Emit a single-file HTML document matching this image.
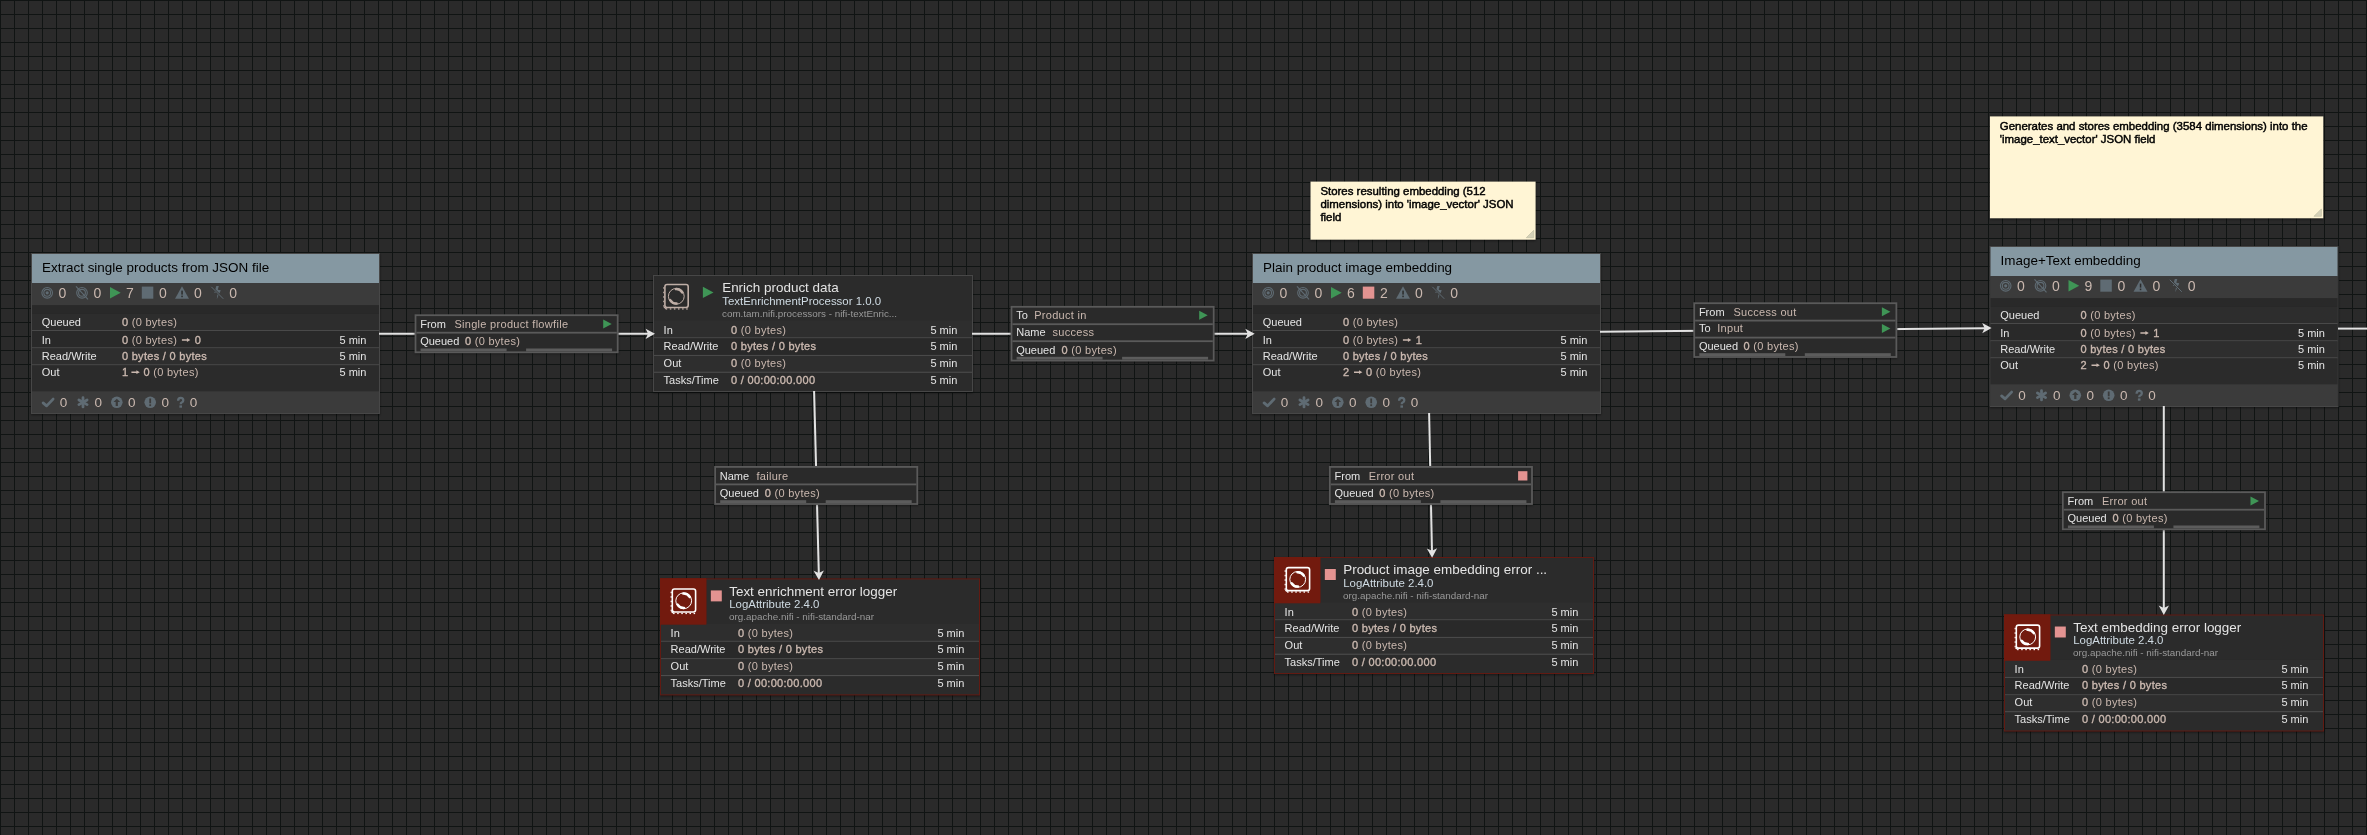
<!DOCTYPE html><html><head><meta charset="utf-8"><style>html,body{margin:0;padding:0;background:#2c2c2c;overflow:hidden}svg{display:block;will-change:transform}</style></head><body><svg width="2367" height="835" viewBox="0 0 2367 835" font-family="'Liberation Sans', sans-serif"><defs><pattern id="g" width="14" height="14" patternUnits="userSpaceOnUse"><rect width="14" height="14" fill="#2a2a2a"/><path d="M0 0.5H14M0.5 0V14" stroke="#101413" stroke-width="1"/></pattern></defs><filter id="sh" x="-10%" y="-30%" width="120%" height="160%"><feGaussianBlur stdDeviation="1.3"/></filter><rect width="2367" height="835" fill="url(#g)"/><rect x="31" y="254" width="349" height="161" fill="#000" opacity="0.45" filter="url(#sh)"/><rect x="31" y="253" width="349" height="161" fill="#474747"/><rect x="32" y="254" width="347" height="159" fill="#2b2b2b"/><rect x="32" y="254" width="347" height="29.2" fill="#8598a2"/><text x="42.1" y="271.8" font-size="13.45" fill="#000000" style="color:#000000">Extract single products from JSON file</text><rect x="32" y="283.2" width="347" height="22.1" fill="#3b3b3b"/><rect x="32" y="305.3" width="347" height="8.4" fill="#292929"/><rect x="32" y="313.7" width="347" height="16.5" fill="#2d2d2d"/><rect x="32" y="330.2" width="347" height="1" fill="#525252"/><rect x="32" y="331.2" width="347" height="16.2" fill="#292929"/><rect x="32" y="347.4" width="347" height="1" fill="#525252"/><rect x="32" y="348.4" width="347" height="16" fill="#2e2e2e"/><rect x="32" y="364.4" width="347" height="1" fill="#525252"/><rect x="32" y="365.4" width="347" height="25.9" fill="#2b2b2b"/><rect x="32" y="391.3" width="347" height="21.7" fill="#3b3b3b"/><g fill="none" stroke="#5f6b73" stroke-width="1.1"><circle cx="47.2" cy="292.8" r="5.3"/><circle cx="47.2" cy="292.8" r="3.4"/></g><circle cx="47.2" cy="292.8" r="1.6" fill="#5f6b73"/><g fill="none" stroke="#5f6b73" stroke-width="1.1"><circle cx="82" cy="292.8" r="5.3"/><circle cx="82" cy="292.8" r="3.4"/><line x1="76" y1="286.3" x2="88" y2="299.3"/></g><path d="M110 286.90000000000003L120.7 292.65000000000003L110 298.40000000000003Z" fill="#3f9556"/><rect x="141.8" y="286.6" width="11.5" height="12.1" fill="#5f6b73"/><path d="M182 286.3L189 298.8L175 298.8Z" fill="#5f6b73"/><rect x="181.3" y="290.6" width="1.5" height="4" fill="#2b2b2b"/><rect x="181.3" y="295.6" width="1.5" height="1.6" fill="#2b2b2b"/><path d="M216.3 286.0L218.8 286.0L217.8 289.8L220.8 290.3L216.8 299.3L217.60000000000002 293.3L214.3 292.8Z" fill="#5f6b73"/><line x1="211.3" y1="286.8" x2="223.3" y2="298.8" stroke="#3b3b3b" stroke-width="2.2"/><line x1="211.3" y1="286.8" x2="223.3" y2="298.8" stroke="#5f6b73" stroke-width="1"/><text x="58.4" y="298.0" font-size="14" fill="#cab8af" style="color:#cab8af" transform-origin="0 0">0</text><text x="93.6" y="298.0" font-size="14" fill="#cab8af" style="color:#cab8af" transform-origin="0 0">0</text><text x="126" y="298.0" font-size="14" fill="#cab8af" style="color:#cab8af" transform-origin="0 0">7</text><text x="159" y="298.0" font-size="14" fill="#cab8af" style="color:#cab8af" transform-origin="0 0">0</text><text x="194" y="298.0" font-size="14" fill="#cab8af" style="color:#cab8af" transform-origin="0 0">0</text><text x="229.3" y="298.0" font-size="14" fill="#cab8af" style="color:#cab8af" transform-origin="0 0">0</text><text x="41.8" y="325.70000000000005" font-size="11" fill="#e4e4e4" style="color:#e4e4e4">Queued</text><text x="41.8" y="343.6" font-size="11" fill="#e4e4e4" style="color:#e4e4e4">In</text><text x="41.8" y="359.70000000000005" font-size="11" fill="#e4e4e4" style="color:#e4e4e4">Read/Write</text><text x="41.8" y="375.8" font-size="11" fill="#e4e4e4" style="color:#e4e4e4">Out</text><text x="121.9" y="325.70000000000005" font-size="11" fill="#cab8af" style="color:#cab8af" letter-spacing="0.3"><tspan stroke="currentColor" stroke-width="0.35">0</tspan><tspan> (0 bytes)</tspan></text><text x="121.9" y="343.6" font-size="11" fill="#cab8af" style="color:#cab8af" letter-spacing="0.3"><tspan stroke="currentColor" stroke-width="0.35">0</tspan><tspan> (0 bytes)</tspan></text><path d="M181.9 339.3H186.9V338.1L190.3 340.0L186.9 341.9V340.7H181.9Z" fill="#cab8af"/><text x="194.8" y="343.6" font-size="11" fill="#cab8af" style="color:#cab8af"><tspan stroke="currentColor" stroke-width="0.35">0</tspan></text><text x="121.9" y="359.70000000000005" font-size="11" fill="#cab8af" style="color:#cab8af" letter-spacing="0.3"><tspan stroke="currentColor" stroke-width="0.35">0 bytes / 0 bytes</tspan></text><text x="121.9" y="375.8" font-size="11" fill="#cab8af" style="color:#cab8af"><tspan stroke="currentColor" stroke-width="0.35">1</tspan></text><path d="M131.4 371.5H136.4V370.3L139.8 372.2L136.4 374.09999999999997V372.9H131.4Z" fill="#cab8af"/><text x="143.4" y="375.8" font-size="11" fill="#cab8af" style="color:#cab8af" letter-spacing="0.3"><tspan stroke="currentColor" stroke-width="0.35">0</tspan><tspan> (0 bytes)</tspan></text><text x="366.4" y="343.6" font-size="11" fill="#e4e4e4" style="color:#e4e4e4" text-anchor="end">5 min</text><text x="366.4" y="359.70000000000005" font-size="11" fill="#e4e4e4" style="color:#e4e4e4" text-anchor="end">5 min</text><text x="366.4" y="375.8" font-size="11" fill="#e4e4e4" style="color:#e4e4e4" text-anchor="end">5 min</text><path d="M43.1 402.9L46.6 405.9L53.1 399.09999999999997" fill="none" stroke="#5f6b73" stroke-width="2.8" stroke-linecap="round" stroke-linejoin="round"/><g stroke="#5f6b73" stroke-width="2.8" stroke-linecap="round"><line x1="83" y1="397.7" x2="83" y2="406.90000000000003"/><line x1="78.9" y1="400.0" x2="87.1" y2="404.6"/><line x1="78.9" y1="404.6" x2="87.1" y2="400.0"/></g><circle cx="116.8" cy="402.3" r="5.8" fill="#5f6b73"/><path d="M116.8 398.7L120.1 402.0L117.89999999999999 402.0L117.89999999999999 406.1L115.7 406.1L115.7 402.0L113.5 402.0Z" fill="#3b3b3b"/><circle cx="150.2" cy="402.3" r="5.8" fill="#5f6b73"/><rect x="149.29999999999998" y="398.5" width="1.8" height="4.8" fill="#3b3b3b"/><rect x="149.29999999999998" y="404.3" width="1.8" height="1.8" fill="#3b3b3b"/><path d="M178.10000000000002 400.8Q178.10000000000002 397.90000000000003 180.70000000000002 397.90000000000003Q183.3 397.90000000000003 183.3 400.3Q183.3 401.8 181.70000000000002 402.5Q180.70000000000002 403.0 180.70000000000002 404.20000000000005" fill="none" stroke="#5f6b73" stroke-width="2.3"/><rect x="179.4" y="405.40000000000003" width="2.6" height="2.3" fill="#5f6b73"/><text x="59.7" y="406.70000000000005" font-size="13.5" fill="#cab8af" style="color:#cab8af">0</text><text x="94.5" y="406.70000000000005" font-size="13.5" fill="#cab8af" style="color:#cab8af">0</text><text x="128" y="406.70000000000005" font-size="13.5" fill="#cab8af" style="color:#cab8af">0</text><text x="161.4" y="406.70000000000005" font-size="13.5" fill="#cab8af" style="color:#cab8af">0</text><text x="189.7" y="406.70000000000005" font-size="13.5" fill="#cab8af" style="color:#cab8af">0</text><rect x="1252" y="254" width="349" height="161" fill="#000" opacity="0.45" filter="url(#sh)"/><rect x="1252" y="253" width="349" height="161" fill="#474747"/><rect x="1253" y="254" width="347" height="159" fill="#2b2b2b"/><rect x="1253" y="254" width="347" height="29.2" fill="#8598a2"/><text x="1263.1" y="271.8" font-size="13.45" fill="#000000" style="color:#000000">Plain product image embedding</text><rect x="1253" y="283.2" width="347" height="22.1" fill="#3b3b3b"/><rect x="1253" y="305.3" width="347" height="8.4" fill="#292929"/><rect x="1253" y="313.7" width="347" height="16.5" fill="#2d2d2d"/><rect x="1253" y="330.2" width="347" height="1" fill="#525252"/><rect x="1253" y="331.2" width="347" height="16.2" fill="#292929"/><rect x="1253" y="347.4" width="347" height="1" fill="#525252"/><rect x="1253" y="348.4" width="347" height="16" fill="#2e2e2e"/><rect x="1253" y="364.4" width="347" height="1" fill="#525252"/><rect x="1253" y="365.4" width="347" height="25.9" fill="#2b2b2b"/><rect x="1253" y="391.3" width="347" height="21.7" fill="#3b3b3b"/><g fill="none" stroke="#5f6b73" stroke-width="1.1"><circle cx="1268.2" cy="292.8" r="5.3"/><circle cx="1268.2" cy="292.8" r="3.4"/></g><circle cx="1268.2" cy="292.8" r="1.6" fill="#5f6b73"/><g fill="none" stroke="#5f6b73" stroke-width="1.1"><circle cx="1303" cy="292.8" r="5.3"/><circle cx="1303" cy="292.8" r="3.4"/><line x1="1297" y1="286.3" x2="1309" y2="299.3"/></g><path d="M1331 286.90000000000003L1341.7 292.65000000000003L1331 298.40000000000003Z" fill="#3f9556"/><rect x="1362.8" y="286.6" width="11.5" height="12.1" fill="#e39391"/><path d="M1403 286.3L1410 298.8L1396 298.8Z" fill="#5f6b73"/><rect x="1402.3" y="290.6" width="1.5" height="4" fill="#2b2b2b"/><rect x="1402.3" y="295.6" width="1.5" height="1.6" fill="#2b2b2b"/><path d="M1437.3 286.0L1439.8 286.0L1438.8 289.8L1441.8 290.3L1437.8 299.3L1438.6 293.3L1435.3 292.8Z" fill="#5f6b73"/><line x1="1432.3" y1="286.8" x2="1444.3" y2="298.8" stroke="#3b3b3b" stroke-width="2.2"/><line x1="1432.3" y1="286.8" x2="1444.3" y2="298.8" stroke="#5f6b73" stroke-width="1"/><text x="1279.4" y="298.0" font-size="14" fill="#cab8af" style="color:#cab8af" transform-origin="0 0">0</text><text x="1314.6" y="298.0" font-size="14" fill="#cab8af" style="color:#cab8af" transform-origin="0 0">0</text><text x="1347" y="298.0" font-size="14" fill="#cab8af" style="color:#cab8af" transform-origin="0 0">6</text><text x="1380" y="298.0" font-size="14" fill="#cab8af" style="color:#cab8af" transform-origin="0 0">2</text><text x="1415" y="298.0" font-size="14" fill="#cab8af" style="color:#cab8af" transform-origin="0 0">0</text><text x="1450.3" y="298.0" font-size="14" fill="#cab8af" style="color:#cab8af" transform-origin="0 0">0</text><text x="1262.8" y="325.70000000000005" font-size="11" fill="#e4e4e4" style="color:#e4e4e4">Queued</text><text x="1262.8" y="343.6" font-size="11" fill="#e4e4e4" style="color:#e4e4e4">In</text><text x="1262.8" y="359.70000000000005" font-size="11" fill="#e4e4e4" style="color:#e4e4e4">Read/Write</text><text x="1262.8" y="375.8" font-size="11" fill="#e4e4e4" style="color:#e4e4e4">Out</text><text x="1342.9" y="325.70000000000005" font-size="11" fill="#cab8af" style="color:#cab8af" letter-spacing="0.3"><tspan stroke="currentColor" stroke-width="0.35">0</tspan><tspan> (0 bytes)</tspan></text><text x="1342.9" y="343.6" font-size="11" fill="#cab8af" style="color:#cab8af" letter-spacing="0.3"><tspan stroke="currentColor" stroke-width="0.35">0</tspan><tspan> (0 bytes)</tspan></text><path d="M1402.9 339.3H1407.9V338.1L1411.3000000000002 340.0L1407.9 341.9V340.7H1402.9Z" fill="#cab8af"/><text x="1415.8000000000002" y="343.6" font-size="11" fill="#cab8af" style="color:#cab8af"><tspan stroke="currentColor" stroke-width="0.35">1</tspan></text><text x="1342.9" y="359.70000000000005" font-size="11" fill="#cab8af" style="color:#cab8af" letter-spacing="0.3"><tspan stroke="currentColor" stroke-width="0.35">0 bytes / 0 bytes</tspan></text><text x="1342.9" y="375.8" font-size="11" fill="#cab8af" style="color:#cab8af"><tspan stroke="currentColor" stroke-width="0.35">2</tspan></text><path d="M1354.0 371.5H1359.0V370.3L1362.4 372.2L1359.0 374.09999999999997V372.9H1354.0Z" fill="#cab8af"/><text x="1366.0" y="375.8" font-size="11" fill="#cab8af" style="color:#cab8af" letter-spacing="0.3"><tspan stroke="currentColor" stroke-width="0.35">0</tspan><tspan> (0 bytes)</tspan></text><text x="1587.4" y="343.6" font-size="11" fill="#e4e4e4" style="color:#e4e4e4" text-anchor="end">5 min</text><text x="1587.4" y="359.70000000000005" font-size="11" fill="#e4e4e4" style="color:#e4e4e4" text-anchor="end">5 min</text><text x="1587.4" y="375.8" font-size="11" fill="#e4e4e4" style="color:#e4e4e4" text-anchor="end">5 min</text><path d="M1264.1 402.9L1267.6 405.9L1274.1 399.09999999999997" fill="none" stroke="#5f6b73" stroke-width="2.8" stroke-linecap="round" stroke-linejoin="round"/><g stroke="#5f6b73" stroke-width="2.8" stroke-linecap="round"><line x1="1304" y1="397.7" x2="1304" y2="406.90000000000003"/><line x1="1299.9" y1="400.0" x2="1308.1" y2="404.6"/><line x1="1299.9" y1="404.6" x2="1308.1" y2="400.0"/></g><circle cx="1337.8" cy="402.3" r="5.8" fill="#5f6b73"/><path d="M1337.8 398.7L1341.1 402.0L1338.8999999999999 402.0L1338.8999999999999 406.1L1336.7 406.1L1336.7 402.0L1334.5 402.0Z" fill="#3b3b3b"/><circle cx="1371.2" cy="402.3" r="5.8" fill="#5f6b73"/><rect x="1370.3" y="398.5" width="1.8" height="4.8" fill="#3b3b3b"/><rect x="1370.3" y="404.3" width="1.8" height="1.8" fill="#3b3b3b"/><path d="M1399.1 400.8Q1399.1 397.90000000000003 1401.7 397.90000000000003Q1404.3 397.90000000000003 1404.3 400.3Q1404.3 401.8 1402.7 402.5Q1401.7 403.0 1401.7 404.20000000000005" fill="none" stroke="#5f6b73" stroke-width="2.3"/><rect x="1400.3999999999999" y="405.40000000000003" width="2.6" height="2.3" fill="#5f6b73"/><text x="1280.7" y="406.70000000000005" font-size="13.5" fill="#cab8af" style="color:#cab8af">0</text><text x="1315.5" y="406.70000000000005" font-size="13.5" fill="#cab8af" style="color:#cab8af">0</text><text x="1349" y="406.70000000000005" font-size="13.5" fill="#cab8af" style="color:#cab8af">0</text><text x="1382.4" y="406.70000000000005" font-size="13.5" fill="#cab8af" style="color:#cab8af">0</text><text x="1410.7" y="406.70000000000005" font-size="13.5" fill="#cab8af" style="color:#cab8af">0</text><rect x="1989.5" y="247" width="349" height="161" fill="#000" opacity="0.45" filter="url(#sh)"/><rect x="1989.5" y="246" width="349" height="161" fill="#474747"/><rect x="1990.5" y="247" width="347" height="159" fill="#2b2b2b"/><rect x="1990.5" y="247" width="347" height="29.2" fill="#8598a2"/><text x="2000.6" y="264.8" font-size="13.45" fill="#000000" style="color:#000000">Image+Text embedding</text><rect x="1990.5" y="276.2" width="347" height="22.1" fill="#3b3b3b"/><rect x="1990.5" y="298.3" width="347" height="8.4" fill="#292929"/><rect x="1990.5" y="306.7" width="347" height="16.5" fill="#2d2d2d"/><rect x="1990.5" y="323.2" width="347" height="1" fill="#525252"/><rect x="1990.5" y="324.2" width="347" height="16.2" fill="#292929"/><rect x="1990.5" y="340.4" width="347" height="1" fill="#525252"/><rect x="1990.5" y="341.4" width="347" height="16" fill="#2e2e2e"/><rect x="1990.5" y="357.4" width="347" height="1" fill="#525252"/><rect x="1990.5" y="358.4" width="347" height="25.9" fill="#2b2b2b"/><rect x="1990.5" y="384.3" width="347" height="21.7" fill="#3b3b3b"/><g fill="none" stroke="#5f6b73" stroke-width="1.1"><circle cx="2005.7" cy="285.8" r="5.3"/><circle cx="2005.7" cy="285.8" r="3.4"/></g><circle cx="2005.7" cy="285.8" r="1.6" fill="#5f6b73"/><g fill="none" stroke="#5f6b73" stroke-width="1.1"><circle cx="2040.5" cy="285.8" r="5.3"/><circle cx="2040.5" cy="285.8" r="3.4"/><line x1="2034.5" y1="279.3" x2="2046.5" y2="292.3"/></g><path d="M2068.5 279.90000000000003L2079.2 285.65000000000003L2068.5 291.40000000000003Z" fill="#3f9556"/><rect x="2100.3" y="279.6" width="11.5" height="12.1" fill="#5f6b73"/><path d="M2140.5 279.3L2147.5 291.8L2133.5 291.8Z" fill="#5f6b73"/><rect x="2139.8" y="283.6" width="1.5" height="4" fill="#2b2b2b"/><rect x="2139.8" y="288.6" width="1.5" height="1.6" fill="#2b2b2b"/><path d="M2174.8 279.0L2177.3 279.0L2176.3 282.8L2179.3 283.3L2175.3 292.3L2176.1000000000004 286.3L2172.8 285.8Z" fill="#5f6b73"/><line x1="2169.8" y1="279.8" x2="2181.8" y2="291.8" stroke="#3b3b3b" stroke-width="2.2"/><line x1="2169.8" y1="279.8" x2="2181.8" y2="291.8" stroke="#5f6b73" stroke-width="1"/><text x="2016.9" y="291.0" font-size="14" fill="#cab8af" style="color:#cab8af" transform-origin="0 0">0</text><text x="2052.1" y="291.0" font-size="14" fill="#cab8af" style="color:#cab8af" transform-origin="0 0">0</text><text x="2084.5" y="291.0" font-size="14" fill="#cab8af" style="color:#cab8af" transform-origin="0 0">9</text><text x="2117.5" y="291.0" font-size="14" fill="#cab8af" style="color:#cab8af" transform-origin="0 0">0</text><text x="2152.5" y="291.0" font-size="14" fill="#cab8af" style="color:#cab8af" transform-origin="0 0">0</text><text x="2187.8" y="291.0" font-size="14" fill="#cab8af" style="color:#cab8af" transform-origin="0 0">0</text><text x="2000.3" y="318.70000000000005" font-size="11" fill="#e4e4e4" style="color:#e4e4e4">Queued</text><text x="2000.3" y="336.6" font-size="11" fill="#e4e4e4" style="color:#e4e4e4">In</text><text x="2000.3" y="352.70000000000005" font-size="11" fill="#e4e4e4" style="color:#e4e4e4">Read/Write</text><text x="2000.3" y="368.8" font-size="11" fill="#e4e4e4" style="color:#e4e4e4">Out</text><text x="2080.4" y="318.70000000000005" font-size="11" fill="#cab8af" style="color:#cab8af" letter-spacing="0.3"><tspan stroke="currentColor" stroke-width="0.35">0</tspan><tspan> (0 bytes)</tspan></text><text x="2080.4" y="336.6" font-size="11" fill="#cab8af" style="color:#cab8af" letter-spacing="0.3"><tspan stroke="currentColor" stroke-width="0.35">0</tspan><tspan> (0 bytes)</tspan></text><path d="M2140.4 332.3H2145.4V331.1L2148.8 333.0L2145.4 334.9V333.7H2140.4Z" fill="#cab8af"/><text x="2153.3" y="336.6" font-size="11" fill="#cab8af" style="color:#cab8af"><tspan stroke="currentColor" stroke-width="0.35">1</tspan></text><text x="2080.4" y="352.70000000000005" font-size="11" fill="#cab8af" style="color:#cab8af" letter-spacing="0.3"><tspan stroke="currentColor" stroke-width="0.35">0 bytes / 0 bytes</tspan></text><text x="2080.4" y="368.8" font-size="11" fill="#cab8af" style="color:#cab8af"><tspan stroke="currentColor" stroke-width="0.35">2</tspan></text><path d="M2091.5 364.5H2096.5V363.3L2099.9 365.2L2096.5 367.09999999999997V365.9H2091.5Z" fill="#cab8af"/><text x="2103.5" y="368.8" font-size="11" fill="#cab8af" style="color:#cab8af" letter-spacing="0.3"><tspan stroke="currentColor" stroke-width="0.35">0</tspan><tspan> (0 bytes)</tspan></text><text x="2324.9" y="336.6" font-size="11" fill="#e4e4e4" style="color:#e4e4e4" text-anchor="end">5 min</text><text x="2324.9" y="352.70000000000005" font-size="11" fill="#e4e4e4" style="color:#e4e4e4" text-anchor="end">5 min</text><text x="2324.9" y="368.8" font-size="11" fill="#e4e4e4" style="color:#e4e4e4" text-anchor="end">5 min</text><path d="M2001.6 395.9L2005.1 398.9L2011.6 392.09999999999997" fill="none" stroke="#5f6b73" stroke-width="2.8" stroke-linecap="round" stroke-linejoin="round"/><g stroke="#5f6b73" stroke-width="2.8" stroke-linecap="round"><line x1="2041.5" y1="390.7" x2="2041.5" y2="399.90000000000003"/><line x1="2037.4" y1="393.0" x2="2045.6" y2="397.6"/><line x1="2037.4" y1="397.6" x2="2045.6" y2="393.0"/></g><circle cx="2075.3" cy="395.3" r="5.8" fill="#5f6b73"/><path d="M2075.3 391.7L2078.6000000000004 395.0L2076.4 395.0L2076.4 399.1L2074.2000000000003 399.1L2074.2000000000003 395.0L2072.0 395.0Z" fill="#3b3b3b"/><circle cx="2108.7" cy="395.3" r="5.8" fill="#5f6b73"/><rect x="2107.7999999999997" y="391.5" width="1.8" height="4.8" fill="#3b3b3b"/><rect x="2107.7999999999997" y="397.3" width="1.8" height="1.8" fill="#3b3b3b"/><path d="M2136.6000000000004 393.8Q2136.6000000000004 390.90000000000003 2139.2000000000003 390.90000000000003Q2141.8 390.90000000000003 2141.8 393.3Q2141.8 394.8 2140.2000000000003 395.5Q2139.2000000000003 396.0 2139.2000000000003 397.20000000000005" fill="none" stroke="#5f6b73" stroke-width="2.3"/><rect x="2137.9" y="398.40000000000003" width="2.6" height="2.3" fill="#5f6b73"/><text x="2018.2" y="399.70000000000005" font-size="13.5" fill="#cab8af" style="color:#cab8af">0</text><text x="2053.0" y="399.70000000000005" font-size="13.5" fill="#cab8af" style="color:#cab8af">0</text><text x="2086.5" y="399.70000000000005" font-size="13.5" fill="#cab8af" style="color:#cab8af">0</text><text x="2119.9" y="399.70000000000005" font-size="13.5" fill="#cab8af" style="color:#cab8af">0</text><text x="2148.2" y="399.70000000000005" font-size="13.5" fill="#cab8af" style="color:#cab8af">0</text><rect x="653" y="276" width="320" height="117" fill="#000" opacity="0.45" filter="url(#sh)"/><rect x="653" y="275" width="320" height="117" fill="#474747"/><rect x="654" y="276" width="318" height="115" fill="#2b2b2b"/><rect x="664.9000000000001" y="284.50000000000006" width="23.3" height="23.0" rx="2.2" fill="none" stroke="#bfaea6" stroke-width="1.6"/><rect x="663.2" y="287.20000000000005" width="1.2" height="1.5" fill="#bfaea6"/><rect x="663.2" y="291.70000000000005" width="1.2" height="1.5" fill="#bfaea6"/><rect x="663.2" y="296.20000000000005" width="1.2" height="1.5" fill="#bfaea6"/><rect x="663.2" y="300.70000000000005" width="1.2" height="1.5" fill="#bfaea6"/><rect x="663.2" y="305.20000000000005" width="1.2" height="1.5" fill="#bfaea6"/><rect x="665.7" y="308.30000000000007" width="1.5" height="1.3" fill="#bfaea6"/><rect x="669.8000000000001" y="308.30000000000007" width="1.5" height="1.3" fill="#bfaea6"/><rect x="673.9000000000001" y="308.30000000000007" width="1.5" height="1.3" fill="#bfaea6"/><rect x="678.0" y="308.30000000000007" width="1.5" height="1.3" fill="#bfaea6"/><rect x="682.1" y="308.30000000000007" width="1.5" height="1.3" fill="#bfaea6"/><rect x="686.2" y="308.30000000000007" width="1.5" height="1.3" fill="#bfaea6"/><path d="M663.9000000000001 307.1L666.2 308.70000000000005" stroke="#bfaea6" stroke-width="1.2"/><circle cx="676.3000000000001" cy="296.30000000000007" r="7.9" fill="none" stroke="#bfaea6" stroke-width="1.0"/><path d="M676.05 289.10A7.2 7.2 0 0 1 682.41 292.48" fill="none" stroke="#bfaea6" stroke-width="2.5" stroke-linecap="round"/><path d="M676.55 303.50A7.2 7.2 0 0 1 670.19 300.12" fill="none" stroke="#bfaea6" stroke-width="2.5" stroke-linecap="round"/><path d="M702.9000000000001 286.8L713.5000000000001 292.45L702.9000000000001 298.1Z" fill="#3f9556"/><text x="722.2" y="292.1" font-size="13.45" fill="#e4e4e4" style="color:#e4e4e4">Enrich product data</text><text x="722.2" y="304.70000000000005" font-size="11.45" fill="#cfdbe3" style="color:#cfdbe3">TextEnrichmentProcessor 1.0.0</text><text x="722.0" y="316.70000000000005" font-size="9.85" fill="#9a9a9a" style="color:#9a9a9a">com.tam.nifi.processors - nifi-textEnric...</text><rect x="654" y="320.40000000000003" width="318" height="17" fill="#2e2e2e"/><rect x="654" y="337.40000000000003" width="318" height="1" fill="#525252"/><rect x="654" y="338.40000000000003" width="318" height="16.5" fill="#292929"/><rect x="654" y="354.90000000000003" width="318" height="1" fill="#525252"/><rect x="654" y="355.90000000000003" width="318" height="15.8" fill="#2e2e2e"/><rect x="654" y="371.70000000000005" width="318" height="1" fill="#525252"/><text x="663.6" y="333.90000000000003" font-size="11" fill="#e4e4e4" style="color:#e4e4e4">In</text><text x="663.6" y="349.8" font-size="11" fill="#e4e4e4" style="color:#e4e4e4">Read/Write</text><text x="663.6" y="366.70000000000005" font-size="11" fill="#e4e4e4" style="color:#e4e4e4">Out</text><text x="663.6" y="383.5" font-size="11" fill="#e4e4e4" style="color:#e4e4e4">Tasks/Time</text><text x="731.0" y="333.90000000000003" font-size="11" fill="#cab8af" style="color:#cab8af" letter-spacing="0.3"><tspan stroke="currentColor" stroke-width="0.35">0</tspan><tspan> (0 bytes)</tspan></text><text x="731.0" y="349.8" font-size="11" fill="#cab8af" style="color:#cab8af" letter-spacing="0.3"><tspan stroke="currentColor" stroke-width="0.35">0 bytes / 0 bytes</tspan></text><text x="731.0" y="366.70000000000005" font-size="11" fill="#cab8af" style="color:#cab8af" letter-spacing="0.3"><tspan stroke="currentColor" stroke-width="0.35">0</tspan><tspan> (0 bytes)</tspan></text><text x="731.0" y="383.5" font-size="11" fill="#cab8af" style="color:#cab8af" letter-spacing="0.3"><tspan stroke="currentColor" stroke-width="0.35">0 / 00:00:00.000</tspan></text><text x="957.3000000000001" y="333.90000000000003" font-size="11" fill="#e4e4e4" style="color:#e4e4e4" text-anchor="end">5 min</text><text x="957.3000000000001" y="349.8" font-size="11" fill="#e4e4e4" style="color:#e4e4e4" text-anchor="end">5 min</text><text x="957.3000000000001" y="366.70000000000005" font-size="11" fill="#e4e4e4" style="color:#e4e4e4" text-anchor="end">5 min</text><text x="957.3000000000001" y="383.5" font-size="11" fill="#e4e4e4" style="color:#e4e4e4" text-anchor="end">5 min</text><rect x="660" y="579.4" width="320" height="117" fill="#000" opacity="0.45" filter="url(#sh)"/><rect x="660" y="578.4" width="320" height="117" fill="#621a12"/><rect x="661" y="579.4" width="318" height="115" fill="#2b2b2b"/><rect x="660" y="578.4" width="46.3" height="46.3" fill="#721a0e"/><rect x="672.3000000000001" y="588.9999999999999" width="23.3" height="23.0" rx="2.2" fill="none" stroke="#ffffff" stroke-width="1.6"/><rect x="670.6" y="591.6999999999999" width="1.2" height="1.5" fill="#ffffff"/><rect x="670.6" y="596.1999999999999" width="1.2" height="1.5" fill="#ffffff"/><rect x="670.6" y="600.6999999999999" width="1.2" height="1.5" fill="#ffffff"/><rect x="670.6" y="605.1999999999999" width="1.2" height="1.5" fill="#ffffff"/><rect x="670.6" y="609.6999999999999" width="1.2" height="1.5" fill="#ffffff"/><rect x="673.1" y="612.8" width="1.5" height="1.3" fill="#ffffff"/><rect x="677.2" y="612.8" width="1.5" height="1.3" fill="#ffffff"/><rect x="681.3000000000001" y="612.8" width="1.5" height="1.3" fill="#ffffff"/><rect x="685.4" y="612.8" width="1.5" height="1.3" fill="#ffffff"/><rect x="689.5" y="612.8" width="1.5" height="1.3" fill="#ffffff"/><rect x="693.6" y="612.8" width="1.5" height="1.3" fill="#ffffff"/><path d="M671.3000000000001 611.5999999999999L673.6 613.1999999999999" stroke="#ffffff" stroke-width="1.2"/><circle cx="683.7" cy="600.8" r="7.9" fill="none" stroke="#ffffff" stroke-width="1.0"/><path d="M683.45 593.60A7.2 7.2 0 0 1 689.81 596.98" fill="none" stroke="#ffffff" stroke-width="2.5" stroke-linecap="round"/><path d="M683.95 608.00A7.2 7.2 0 0 1 677.59 604.62" fill="none" stroke="#ffffff" stroke-width="2.5" stroke-linecap="round"/><rect x="710.3" y="590.0" width="11.6" height="11.6" fill="#1a1a1a" opacity="0.35"/><rect x="710.8" y="590.4" width="11" height="11" fill="#e39391"/><text x="729.2" y="595.5" font-size="13.45" fill="#e4e4e4" style="color:#e4e4e4">Text enrichment error logger</text><text x="729.2" y="608.1" font-size="11.45" fill="#cfdbe3" style="color:#cfdbe3">LogAttribute 2.4.0</text><text x="729.0" y="620.1" font-size="9.85" fill="#9a9a9a" style="color:#9a9a9a">org.apache.nifi - nifi-standard-nar</text><rect x="661" y="623.8" width="318" height="17" fill="#2e2e2e"/><rect x="661" y="640.8" width="318" height="1" fill="#525252"/><rect x="661" y="641.8" width="318" height="16.5" fill="#292929"/><rect x="661" y="658.3" width="318" height="1" fill="#525252"/><rect x="661" y="659.3" width="318" height="15.8" fill="#2e2e2e"/><rect x="661" y="675.1" width="318" height="1" fill="#525252"/><rect x="660" y="578.4" width="46.3" height="46.3" fill="#721a0e"/><rect x="672.3000000000001" y="588.9999999999999" width="23.3" height="23.0" rx="2.2" fill="none" stroke="#ffffff" stroke-width="1.6"/><rect x="670.6" y="591.6999999999999" width="1.2" height="1.5" fill="#ffffff"/><rect x="670.6" y="596.1999999999999" width="1.2" height="1.5" fill="#ffffff"/><rect x="670.6" y="600.6999999999999" width="1.2" height="1.5" fill="#ffffff"/><rect x="670.6" y="605.1999999999999" width="1.2" height="1.5" fill="#ffffff"/><rect x="670.6" y="609.6999999999999" width="1.2" height="1.5" fill="#ffffff"/><rect x="673.1" y="612.8" width="1.5" height="1.3" fill="#ffffff"/><rect x="677.2" y="612.8" width="1.5" height="1.3" fill="#ffffff"/><rect x="681.3000000000001" y="612.8" width="1.5" height="1.3" fill="#ffffff"/><rect x="685.4" y="612.8" width="1.5" height="1.3" fill="#ffffff"/><rect x="689.5" y="612.8" width="1.5" height="1.3" fill="#ffffff"/><rect x="693.6" y="612.8" width="1.5" height="1.3" fill="#ffffff"/><path d="M671.3000000000001 611.5999999999999L673.6 613.1999999999999" stroke="#ffffff" stroke-width="1.2"/><circle cx="683.7" cy="600.8" r="7.9" fill="none" stroke="#ffffff" stroke-width="1.0"/><path d="M683.45 593.60A7.2 7.2 0 0 1 689.81 596.98" fill="none" stroke="#ffffff" stroke-width="2.5" stroke-linecap="round"/><path d="M683.95 608.00A7.2 7.2 0 0 1 677.59 604.62" fill="none" stroke="#ffffff" stroke-width="2.5" stroke-linecap="round"/><text x="670.6" y="637.3" font-size="11" fill="#e4e4e4" style="color:#e4e4e4">In</text><text x="670.6" y="653.2" font-size="11" fill="#e4e4e4" style="color:#e4e4e4">Read/Write</text><text x="670.6" y="670.1" font-size="11" fill="#e4e4e4" style="color:#e4e4e4">Out</text><text x="670.6" y="686.9" font-size="11" fill="#e4e4e4" style="color:#e4e4e4">Tasks/Time</text><text x="738.0" y="637.3" font-size="11" fill="#cab8af" style="color:#cab8af" letter-spacing="0.3"><tspan stroke="currentColor" stroke-width="0.35">0</tspan><tspan> (0 bytes)</tspan></text><text x="738.0" y="653.2" font-size="11" fill="#cab8af" style="color:#cab8af" letter-spacing="0.3"><tspan stroke="currentColor" stroke-width="0.35">0 bytes / 0 bytes</tspan></text><text x="738.0" y="670.1" font-size="11" fill="#cab8af" style="color:#cab8af" letter-spacing="0.3"><tspan stroke="currentColor" stroke-width="0.35">0</tspan><tspan> (0 bytes)</tspan></text><text x="738.0" y="686.9" font-size="11" fill="#cab8af" style="color:#cab8af" letter-spacing="0.3"><tspan stroke="currentColor" stroke-width="0.35">0 / 00:00:00.000</tspan></text><text x="964.3000000000001" y="637.3" font-size="11" fill="#e4e4e4" style="color:#e4e4e4" text-anchor="end">5 min</text><text x="964.3000000000001" y="653.2" font-size="11" fill="#e4e4e4" style="color:#e4e4e4" text-anchor="end">5 min</text><text x="964.3000000000001" y="670.1" font-size="11" fill="#e4e4e4" style="color:#e4e4e4" text-anchor="end">5 min</text><text x="964.3000000000001" y="686.9" font-size="11" fill="#e4e4e4" style="color:#e4e4e4" text-anchor="end">5 min</text><rect x="1274" y="558" width="320" height="117" fill="#000" opacity="0.45" filter="url(#sh)"/><rect x="1274" y="557" width="320" height="117" fill="#621a12"/><rect x="1275" y="558" width="318" height="115" fill="#2b2b2b"/><rect x="1274" y="557" width="46.3" height="46.3" fill="#721a0e"/><rect x="1286.3" y="567.5999999999999" width="23.3" height="23.0" rx="2.2" fill="none" stroke="#ffffff" stroke-width="1.6"/><rect x="1284.6" y="570.3" width="1.2" height="1.5" fill="#ffffff"/><rect x="1284.6" y="574.8" width="1.2" height="1.5" fill="#ffffff"/><rect x="1284.6" y="579.3" width="1.2" height="1.5" fill="#ffffff"/><rect x="1284.6" y="583.8" width="1.2" height="1.5" fill="#ffffff"/><rect x="1284.6" y="588.3" width="1.2" height="1.5" fill="#ffffff"/><rect x="1287.1" y="591.4" width="1.5" height="1.3" fill="#ffffff"/><rect x="1291.1999999999998" y="591.4" width="1.5" height="1.3" fill="#ffffff"/><rect x="1295.3" y="591.4" width="1.5" height="1.3" fill="#ffffff"/><rect x="1299.3999999999999" y="591.4" width="1.5" height="1.3" fill="#ffffff"/><rect x="1303.5" y="591.4" width="1.5" height="1.3" fill="#ffffff"/><rect x="1307.6" y="591.4" width="1.5" height="1.3" fill="#ffffff"/><path d="M1285.3 590.1999999999999L1287.6 591.8" stroke="#ffffff" stroke-width="1.2"/><circle cx="1297.6999999999998" cy="579.4" r="7.9" fill="none" stroke="#ffffff" stroke-width="1.0"/><path d="M1297.45 572.20A7.2 7.2 0 0 1 1303.81 575.58" fill="none" stroke="#ffffff" stroke-width="2.5" stroke-linecap="round"/><path d="M1297.95 586.60A7.2 7.2 0 0 1 1291.59 583.22" fill="none" stroke="#ffffff" stroke-width="2.5" stroke-linecap="round"/><rect x="1324.3" y="568.6" width="11.6" height="11.6" fill="#1a1a1a" opacity="0.35"/><rect x="1324.8" y="569.0" width="11" height="11" fill="#e39391"/><text x="1343.2" y="574.1" font-size="13.45" fill="#e4e4e4" style="color:#e4e4e4">Product image embedding error ...</text><text x="1343.2" y="586.7" font-size="11.45" fill="#cfdbe3" style="color:#cfdbe3">LogAttribute 2.4.0</text><text x="1343.0" y="598.7" font-size="9.85" fill="#9a9a9a" style="color:#9a9a9a">org.apache.nifi - nifi-standard-nar</text><rect x="1275" y="602.4" width="318" height="17" fill="#2e2e2e"/><rect x="1275" y="619.4" width="318" height="1" fill="#525252"/><rect x="1275" y="620.4" width="318" height="16.5" fill="#292929"/><rect x="1275" y="636.9" width="318" height="1" fill="#525252"/><rect x="1275" y="637.9" width="318" height="15.8" fill="#2e2e2e"/><rect x="1275" y="653.7" width="318" height="1" fill="#525252"/><rect x="1274" y="557" width="46.3" height="46.3" fill="#721a0e"/><rect x="1286.3" y="567.5999999999999" width="23.3" height="23.0" rx="2.2" fill="none" stroke="#ffffff" stroke-width="1.6"/><rect x="1284.6" y="570.3" width="1.2" height="1.5" fill="#ffffff"/><rect x="1284.6" y="574.8" width="1.2" height="1.5" fill="#ffffff"/><rect x="1284.6" y="579.3" width="1.2" height="1.5" fill="#ffffff"/><rect x="1284.6" y="583.8" width="1.2" height="1.5" fill="#ffffff"/><rect x="1284.6" y="588.3" width="1.2" height="1.5" fill="#ffffff"/><rect x="1287.1" y="591.4" width="1.5" height="1.3" fill="#ffffff"/><rect x="1291.1999999999998" y="591.4" width="1.5" height="1.3" fill="#ffffff"/><rect x="1295.3" y="591.4" width="1.5" height="1.3" fill="#ffffff"/><rect x="1299.3999999999999" y="591.4" width="1.5" height="1.3" fill="#ffffff"/><rect x="1303.5" y="591.4" width="1.5" height="1.3" fill="#ffffff"/><rect x="1307.6" y="591.4" width="1.5" height="1.3" fill="#ffffff"/><path d="M1285.3 590.1999999999999L1287.6 591.8" stroke="#ffffff" stroke-width="1.2"/><circle cx="1297.6999999999998" cy="579.4" r="7.9" fill="none" stroke="#ffffff" stroke-width="1.0"/><path d="M1297.45 572.20A7.2 7.2 0 0 1 1303.81 575.58" fill="none" stroke="#ffffff" stroke-width="2.5" stroke-linecap="round"/><path d="M1297.95 586.60A7.2 7.2 0 0 1 1291.59 583.22" fill="none" stroke="#ffffff" stroke-width="2.5" stroke-linecap="round"/><text x="1284.6000000000001" y="615.9" font-size="11" fill="#e4e4e4" style="color:#e4e4e4">In</text><text x="1284.6000000000001" y="631.8000000000001" font-size="11" fill="#e4e4e4" style="color:#e4e4e4">Read/Write</text><text x="1284.6000000000001" y="648.7" font-size="11" fill="#e4e4e4" style="color:#e4e4e4">Out</text><text x="1284.6000000000001" y="665.5" font-size="11" fill="#e4e4e4" style="color:#e4e4e4">Tasks/Time</text><text x="1352.0" y="615.9" font-size="11" fill="#cab8af" style="color:#cab8af" letter-spacing="0.3"><tspan stroke="currentColor" stroke-width="0.35">0</tspan><tspan> (0 bytes)</tspan></text><text x="1352.0" y="631.8000000000001" font-size="11" fill="#cab8af" style="color:#cab8af" letter-spacing="0.3"><tspan stroke="currentColor" stroke-width="0.35">0 bytes / 0 bytes</tspan></text><text x="1352.0" y="648.7" font-size="11" fill="#cab8af" style="color:#cab8af" letter-spacing="0.3"><tspan stroke="currentColor" stroke-width="0.35">0</tspan><tspan> (0 bytes)</tspan></text><text x="1352.0" y="665.5" font-size="11" fill="#cab8af" style="color:#cab8af" letter-spacing="0.3"><tspan stroke="currentColor" stroke-width="0.35">0 / 00:00:00.000</tspan></text><text x="1578.3000000000002" y="615.9" font-size="11" fill="#e4e4e4" style="color:#e4e4e4" text-anchor="end">5 min</text><text x="1578.3000000000002" y="631.8000000000001" font-size="11" fill="#e4e4e4" style="color:#e4e4e4" text-anchor="end">5 min</text><text x="1578.3000000000002" y="648.7" font-size="11" fill="#e4e4e4" style="color:#e4e4e4" text-anchor="end">5 min</text><text x="1578.3000000000002" y="665.5" font-size="11" fill="#e4e4e4" style="color:#e4e4e4" text-anchor="end">5 min</text><rect x="2004" y="615.5" width="320" height="117" fill="#000" opacity="0.45" filter="url(#sh)"/><rect x="2004" y="614.5" width="320" height="117" fill="#621a12"/><rect x="2005" y="615.5" width="318" height="115" fill="#2b2b2b"/><rect x="2004" y="614.5" width="46.3" height="46.3" fill="#721a0e"/><rect x="2016.3" y="625.0999999999999" width="23.3" height="23.0" rx="2.2" fill="none" stroke="#ffffff" stroke-width="1.6"/><rect x="2014.6" y="627.8" width="1.2" height="1.5" fill="#ffffff"/><rect x="2014.6" y="632.3" width="1.2" height="1.5" fill="#ffffff"/><rect x="2014.6" y="636.8" width="1.2" height="1.5" fill="#ffffff"/><rect x="2014.6" y="641.3" width="1.2" height="1.5" fill="#ffffff"/><rect x="2014.6" y="645.8" width="1.2" height="1.5" fill="#ffffff"/><rect x="2017.1" y="648.9" width="1.5" height="1.3" fill="#ffffff"/><rect x="2021.1999999999998" y="648.9" width="1.5" height="1.3" fill="#ffffff"/><rect x="2025.3" y="648.9" width="1.5" height="1.3" fill="#ffffff"/><rect x="2029.3999999999999" y="648.9" width="1.5" height="1.3" fill="#ffffff"/><rect x="2033.5" y="648.9" width="1.5" height="1.3" fill="#ffffff"/><rect x="2037.6" y="648.9" width="1.5" height="1.3" fill="#ffffff"/><path d="M2015.3 647.6999999999999L2017.6 649.3" stroke="#ffffff" stroke-width="1.2"/><circle cx="2027.6999999999998" cy="636.9" r="7.9" fill="none" stroke="#ffffff" stroke-width="1.0"/><path d="M2027.45 629.70A7.2 7.2 0 0 1 2033.81 633.08" fill="none" stroke="#ffffff" stroke-width="2.5" stroke-linecap="round"/><path d="M2027.95 644.10A7.2 7.2 0 0 1 2021.59 640.72" fill="none" stroke="#ffffff" stroke-width="2.5" stroke-linecap="round"/><rect x="2054.3" y="626.1" width="11.6" height="11.6" fill="#1a1a1a" opacity="0.35"/><rect x="2054.8" y="626.5" width="11" height="11" fill="#e39391"/><text x="2073.2" y="631.6" font-size="13.45" fill="#e4e4e4" style="color:#e4e4e4">Text embedding error logger</text><text x="2073.2" y="644.2" font-size="11.45" fill="#cfdbe3" style="color:#cfdbe3">LogAttribute 2.4.0</text><text x="2073.0" y="656.2" font-size="9.85" fill="#9a9a9a" style="color:#9a9a9a">org.apache.nifi - nifi-standard-nar</text><rect x="2005" y="659.9" width="318" height="17" fill="#2e2e2e"/><rect x="2005" y="676.9" width="318" height="1" fill="#525252"/><rect x="2005" y="677.9" width="318" height="16.5" fill="#292929"/><rect x="2005" y="694.4" width="318" height="1" fill="#525252"/><rect x="2005" y="695.4" width="318" height="15.8" fill="#2e2e2e"/><rect x="2005" y="711.2" width="318" height="1" fill="#525252"/><rect x="2004" y="614.5" width="46.3" height="46.3" fill="#721a0e"/><rect x="2016.3" y="625.0999999999999" width="23.3" height="23.0" rx="2.2" fill="none" stroke="#ffffff" stroke-width="1.6"/><rect x="2014.6" y="627.8" width="1.2" height="1.5" fill="#ffffff"/><rect x="2014.6" y="632.3" width="1.2" height="1.5" fill="#ffffff"/><rect x="2014.6" y="636.8" width="1.2" height="1.5" fill="#ffffff"/><rect x="2014.6" y="641.3" width="1.2" height="1.5" fill="#ffffff"/><rect x="2014.6" y="645.8" width="1.2" height="1.5" fill="#ffffff"/><rect x="2017.1" y="648.9" width="1.5" height="1.3" fill="#ffffff"/><rect x="2021.1999999999998" y="648.9" width="1.5" height="1.3" fill="#ffffff"/><rect x="2025.3" y="648.9" width="1.5" height="1.3" fill="#ffffff"/><rect x="2029.3999999999999" y="648.9" width="1.5" height="1.3" fill="#ffffff"/><rect x="2033.5" y="648.9" width="1.5" height="1.3" fill="#ffffff"/><rect x="2037.6" y="648.9" width="1.5" height="1.3" fill="#ffffff"/><path d="M2015.3 647.6999999999999L2017.6 649.3" stroke="#ffffff" stroke-width="1.2"/><circle cx="2027.6999999999998" cy="636.9" r="7.9" fill="none" stroke="#ffffff" stroke-width="1.0"/><path d="M2027.45 629.70A7.2 7.2 0 0 1 2033.81 633.08" fill="none" stroke="#ffffff" stroke-width="2.5" stroke-linecap="round"/><path d="M2027.95 644.10A7.2 7.2 0 0 1 2021.59 640.72" fill="none" stroke="#ffffff" stroke-width="2.5" stroke-linecap="round"/><text x="2014.6000000000001" y="673.4" font-size="11" fill="#e4e4e4" style="color:#e4e4e4">In</text><text x="2014.6000000000001" y="689.3000000000001" font-size="11" fill="#e4e4e4" style="color:#e4e4e4">Read/Write</text><text x="2014.6000000000001" y="706.2" font-size="11" fill="#e4e4e4" style="color:#e4e4e4">Out</text><text x="2014.6000000000001" y="723.0" font-size="11" fill="#e4e4e4" style="color:#e4e4e4">Tasks/Time</text><text x="2082.0" y="673.4" font-size="11" fill="#cab8af" style="color:#cab8af" letter-spacing="0.3"><tspan stroke="currentColor" stroke-width="0.35">0</tspan><tspan> (0 bytes)</tspan></text><text x="2082.0" y="689.3000000000001" font-size="11" fill="#cab8af" style="color:#cab8af" letter-spacing="0.3"><tspan stroke="currentColor" stroke-width="0.35">0 bytes / 0 bytes</tspan></text><text x="2082.0" y="706.2" font-size="11" fill="#cab8af" style="color:#cab8af" letter-spacing="0.3"><tspan stroke="currentColor" stroke-width="0.35">0</tspan><tspan> (0 bytes)</tspan></text><text x="2082.0" y="723.0" font-size="11" fill="#cab8af" style="color:#cab8af" letter-spacing="0.3"><tspan stroke="currentColor" stroke-width="0.35">0 / 00:00:00.000</tspan></text><text x="2308.3" y="673.4" font-size="11" fill="#e4e4e4" style="color:#e4e4e4" text-anchor="end">5 min</text><text x="2308.3" y="689.3000000000001" font-size="11" fill="#e4e4e4" style="color:#e4e4e4" text-anchor="end">5 min</text><text x="2308.3" y="706.2" font-size="11" fill="#e4e4e4" style="color:#e4e4e4" text-anchor="end">5 min</text><text x="2308.3" y="723.0" font-size="11" fill="#e4e4e4" style="color:#e4e4e4" text-anchor="end">5 min</text><line x1="379" y1="333.8" x2="648.5" y2="333.8" stroke="#e2e2e2" stroke-width="2"/><path d="M655.0 333.8L645.6 338.9L648.0 333.8L645.6 328.7Z" fill="#e2e2e2"/><line x1="972" y1="333.8" x2="1248.2" y2="333.8" stroke="#e2e2e2" stroke-width="2"/><path d="M1254.7 333.8L1245.3 338.9L1247.7 333.8L1245.3 328.7Z" fill="#e2e2e2"/><line x1="1600" y1="331.7" x2="1985.1" y2="328.16" stroke="#e2e2e2" stroke-width="2"/><path d="M1991.6 328.1L1982.2 333.3L1984.6 328.2L1982.2 323.0Z" fill="#e2e2e2"/><line x1="2338" y1="328.6" x2="2367" y2="328.6" stroke="#e2e2e2" stroke-width="2"/><line x1="814.1" y1="391" x2="818.83" y2="573.6" stroke="#e2e2e2" stroke-width="2"/><path d="M819.0 580.1L813.6 570.8L818.8 573.1L823.9 570.6Z" fill="#e2e2e2"/><line x1="1429.1" y1="413" x2="1431.97" y2="551.3" stroke="#e2e2e2" stroke-width="2"/><path d="M1432.1 557.8L1426.8 548.5L1432.0 550.8L1437.1 548.3Z" fill="#e2e2e2"/><line x1="2163.8" y1="406" x2="2163.8" y2="608.4" stroke="#e2e2e2" stroke-width="2"/><path d="M2163.8 614.9L2158.7 605.5L2163.8 607.9L2169.0 605.5Z" fill="#e2e2e2"/><rect x="414.6" y="315.3" width="204" height="38.9" fill="#000" opacity="0.35" filter="url(#sh)"/><rect x="414.6" y="314.3" width="204" height="38.9" fill="#5a5a5a"/><rect x="416.40000000000003" y="316.1" width="200.4" height="35.3" fill="#2a2a2a"/><rect x="416.40000000000003" y="331.8" width="200.4" height="1.8" fill="#5a5a5a"/><text x="420.20000000000005" y="328.0" font-size="11" fill="#e4e4e4" style="color:#e4e4e4">From</text><text x="454.40000000000003" y="328.0" font-size="11" fill="#cab8af" style="color:#cab8af" letter-spacing="0.3">Single product flowfile</text><path d="M603.2 319.6L611.7 324.1L603.2 328.6Z" fill="#3f9556"/><text x="420.20000000000005" y="345.0" font-size="11" fill="#e4e4e4" style="color:#e4e4e4">Queued</text><text x="464.90000000000003" y="345.0" font-size="11" fill="#cab8af" style="color:#cab8af" letter-spacing="0.3"><tspan stroke="currentColor" stroke-width="0.35">0</tspan><tspan> (0 bytes)</tspan></text><rect x="420.6" y="348.5" width="86" height="2.8" fill="#5c5c5c"/><rect x="526.1" y="348.5" width="86" height="2.8" fill="#5c5c5c"/><rect x="1010.6" y="306.9" width="204" height="55.6" fill="#000" opacity="0.35" filter="url(#sh)"/><rect x="1010.6" y="305.9" width="204" height="55.6" fill="#5a5a5a"/><rect x="1012.4" y="307.7" width="200.4" height="52.0" fill="#2a2a2a"/><rect x="1012.4" y="323.29999999999995" width="200.4" height="1.8" fill="#5a5a5a"/><rect x="1012.4" y="340.29999999999995" width="200.4" height="1.8" fill="#5a5a5a"/><text x="1016.2" y="319.2" font-size="11" fill="#e4e4e4" style="color:#e4e4e4">To</text><text x="1034.2" y="319.2" font-size="11" fill="#cab8af" style="color:#cab8af" letter-spacing="0.3">Product in</text><path d="M1199.2 310.8L1207.7 315.3L1199.2 319.8Z" fill="#3f9556"/><text x="1016.2" y="336.0" font-size="11" fill="#e4e4e4" style="color:#e4e4e4">Name</text><text x="1052.5" y="336.0" font-size="11" fill="#cab8af" style="color:#cab8af" letter-spacing="0.3">success</text><text x="1016.2" y="353.79999999999995" font-size="11" fill="#e4e4e4" style="color:#e4e4e4">Queued</text><text x="1061.6" y="353.79999999999995" font-size="11" fill="#cab8af" style="color:#cab8af" letter-spacing="0.3"><tspan stroke="currentColor" stroke-width="0.35">0</tspan><tspan> (0 bytes)</tspan></text><rect x="1016.6" y="356.79999999999995" width="86" height="2.8" fill="#5c5c5c"/><rect x="1122.1" y="356.79999999999995" width="86" height="2.8" fill="#5c5c5c"/><rect x="1693.3" y="303.3" width="204" height="55.6" fill="#000" opacity="0.35" filter="url(#sh)"/><rect x="1693.3" y="302.3" width="204" height="55.6" fill="#5a5a5a"/><rect x="1695.1" y="304.1" width="200.4" height="52.0" fill="#2a2a2a"/><rect x="1695.1" y="319.7" width="200.4" height="1.8" fill="#5a5a5a"/><rect x="1695.1" y="336.7" width="200.4" height="1.8" fill="#5a5a5a"/><text x="1698.8999999999999" y="315.6" font-size="11" fill="#e4e4e4" style="color:#e4e4e4">From</text><text x="1733.3999999999999" y="315.6" font-size="11" fill="#cab8af" style="color:#cab8af" letter-spacing="0.3">Success out</text><path d="M1881.8999999999999 307.20000000000005L1890.3999999999999 311.70000000000005L1881.8999999999999 316.20000000000005Z" fill="#3f9556"/><text x="1698.8999999999999" y="332.40000000000003" font-size="11" fill="#e4e4e4" style="color:#e4e4e4">To</text><text x="1717.2" y="332.40000000000003" font-size="11" fill="#cab8af" style="color:#cab8af" letter-spacing="0.3">Input</text><path d="M1881.8999999999999 324.00000000000006L1890.3999999999999 328.50000000000006L1881.8999999999999 333.00000000000006Z" fill="#3f9556"/><text x="1698.8999999999999" y="350.2" font-size="11" fill="#e4e4e4" style="color:#e4e4e4">Queued</text><text x="1743.5" y="350.2" font-size="11" fill="#cab8af" style="color:#cab8af" letter-spacing="0.3"><tspan stroke="currentColor" stroke-width="0.35">0</tspan><tspan> (0 bytes)</tspan></text><rect x="1699.3" y="353.2" width="86" height="2.8" fill="#5c5c5c"/><rect x="1804.8" y="353.2" width="86" height="2.8" fill="#5c5c5c"/><rect x="714.2" y="467.0" width="204" height="38.9" fill="#000" opacity="0.35" filter="url(#sh)"/><rect x="714.2" y="466.0" width="204" height="38.9" fill="#5a5a5a"/><rect x="716.0" y="467.8" width="200.4" height="35.3" fill="#2a2a2a"/><rect x="716.0" y="483.5" width="200.4" height="1.8" fill="#5a5a5a"/><text x="719.8000000000001" y="479.7" font-size="11" fill="#e4e4e4" style="color:#e4e4e4">Name</text><text x="756.4000000000001" y="479.7" font-size="11" fill="#cab8af" style="color:#cab8af" letter-spacing="0.3">failure</text><text x="719.8000000000001" y="496.7" font-size="11" fill="#e4e4e4" style="color:#e4e4e4">Queued</text><text x="764.7" y="496.7" font-size="11" fill="#cab8af" style="color:#cab8af" letter-spacing="0.3"><tspan stroke="currentColor" stroke-width="0.35">0</tspan><tspan> (0 bytes)</tspan></text><rect x="720.2" y="500.2" width="86" height="2.8" fill="#5c5c5c"/><rect x="825.7" y="500.2" width="86" height="2.8" fill="#5c5c5c"/><rect x="1328.9" y="467.0" width="204" height="38.9" fill="#000" opacity="0.35" filter="url(#sh)"/><rect x="1328.9" y="466.0" width="204" height="38.9" fill="#5a5a5a"/><rect x="1330.7" y="467.8" width="200.4" height="35.3" fill="#2a2a2a"/><rect x="1330.7" y="483.5" width="200.4" height="1.8" fill="#5a5a5a"/><text x="1334.5" y="479.7" font-size="11" fill="#e4e4e4" style="color:#e4e4e4">From</text><text x="1368.8000000000002" y="479.7" font-size="11" fill="#cab8af" style="color:#cab8af" letter-spacing="0.3">Error out</text><rect x="1518.1000000000001" y="471.2" width="9.3" height="9.3" fill="#e39391"/><text x="1334.5" y="496.7" font-size="11" fill="#e4e4e4" style="color:#e4e4e4">Queued</text><text x="1379.3000000000002" y="496.7" font-size="11" fill="#cab8af" style="color:#cab8af" letter-spacing="0.3"><tspan stroke="currentColor" stroke-width="0.35">0</tspan><tspan> (0 bytes)</tspan></text><rect x="1334.9" y="500.2" width="86" height="2.8" fill="#5c5c5c"/><rect x="1440.4" y="500.2" width="86" height="2.8" fill="#5c5c5c"/><rect x="2061.9" y="492.3" width="204" height="38.9" fill="#000" opacity="0.35" filter="url(#sh)"/><rect x="2061.9" y="491.3" width="204" height="38.9" fill="#5a5a5a"/><rect x="2063.7000000000003" y="493.1" width="200.4" height="35.3" fill="#2a2a2a"/><rect x="2063.7000000000003" y="508.8" width="200.4" height="1.8" fill="#5a5a5a"/><text x="2067.5" y="505.0" font-size="11" fill="#e4e4e4" style="color:#e4e4e4">From</text><text x="2101.9" y="505.0" font-size="11" fill="#cab8af" style="color:#cab8af" letter-spacing="0.3">Error out</text><path d="M2250.5 496.6L2259.0 501.1L2250.5 505.6Z" fill="#3f9556"/><text x="2067.5" y="522.0" font-size="11" fill="#e4e4e4" style="color:#e4e4e4">Queued</text><text x="2112.4" y="522.0" font-size="11" fill="#cab8af" style="color:#cab8af" letter-spacing="0.3"><tspan stroke="currentColor" stroke-width="0.35">0</tspan><tspan> (0 bytes)</tspan></text><rect x="2067.9" y="525.5" width="86" height="2.8" fill="#5c5c5c"/><rect x="2173.4" y="525.5" width="86" height="2.8" fill="#5c5c5c"/><rect x="1310.5" y="182.6" width="225.1" height="58.1" fill="#000" opacity="0.5" filter="url(#sh)"/><rect x="1310.5" y="181.6" width="225.1" height="58.1" fill="#fff5d5"/><path d="M1526.3 237.7L1533.6999999999998 230.29999999999998L1533.6999999999998 237.7Z" fill="#d5d1b8" stroke="#c2bea3" stroke-width="0.7"/><text x="1320.4" y="194.9" font-size="11.45" fill="#000000" style="color:#000000"><tspan stroke="currentColor" stroke-width="0.45">Stores resulting embedding (512</tspan></text><text x="1320.4" y="207.9" font-size="11.45" fill="#000000" style="color:#000000"><tspan stroke="currentColor" stroke-width="0.45">dimensions) into 'image_vector' JSON</tspan></text><text x="1320.4" y="220.9" font-size="11.45" fill="#000000" style="color:#000000"><tspan stroke="currentColor" stroke-width="0.45">field</tspan></text><rect x="1989.9" y="117.4" width="333.4" height="101.9" fill="#000" opacity="0.5" filter="url(#sh)"/><rect x="1989.9" y="116.4" width="333.4" height="101.9" fill="#fff5d5"/><path d="M2314.0 216.3L2321.4 208.9L2321.4 216.3Z" fill="#d5d1b8" stroke="#c2bea3" stroke-width="0.7"/><text x="1999.8000000000002" y="129.70000000000002" font-size="11.45" fill="#000000" style="color:#000000"><tspan stroke="currentColor" stroke-width="0.45">Generates and stores embedding (3584 dimensions) into the</tspan></text><text x="1999.8000000000002" y="142.70000000000002" font-size="11.45" fill="#000000" style="color:#000000"><tspan stroke="currentColor" stroke-width="0.45">'image_text_vector' JSON field</tspan></text></svg></body></html>
